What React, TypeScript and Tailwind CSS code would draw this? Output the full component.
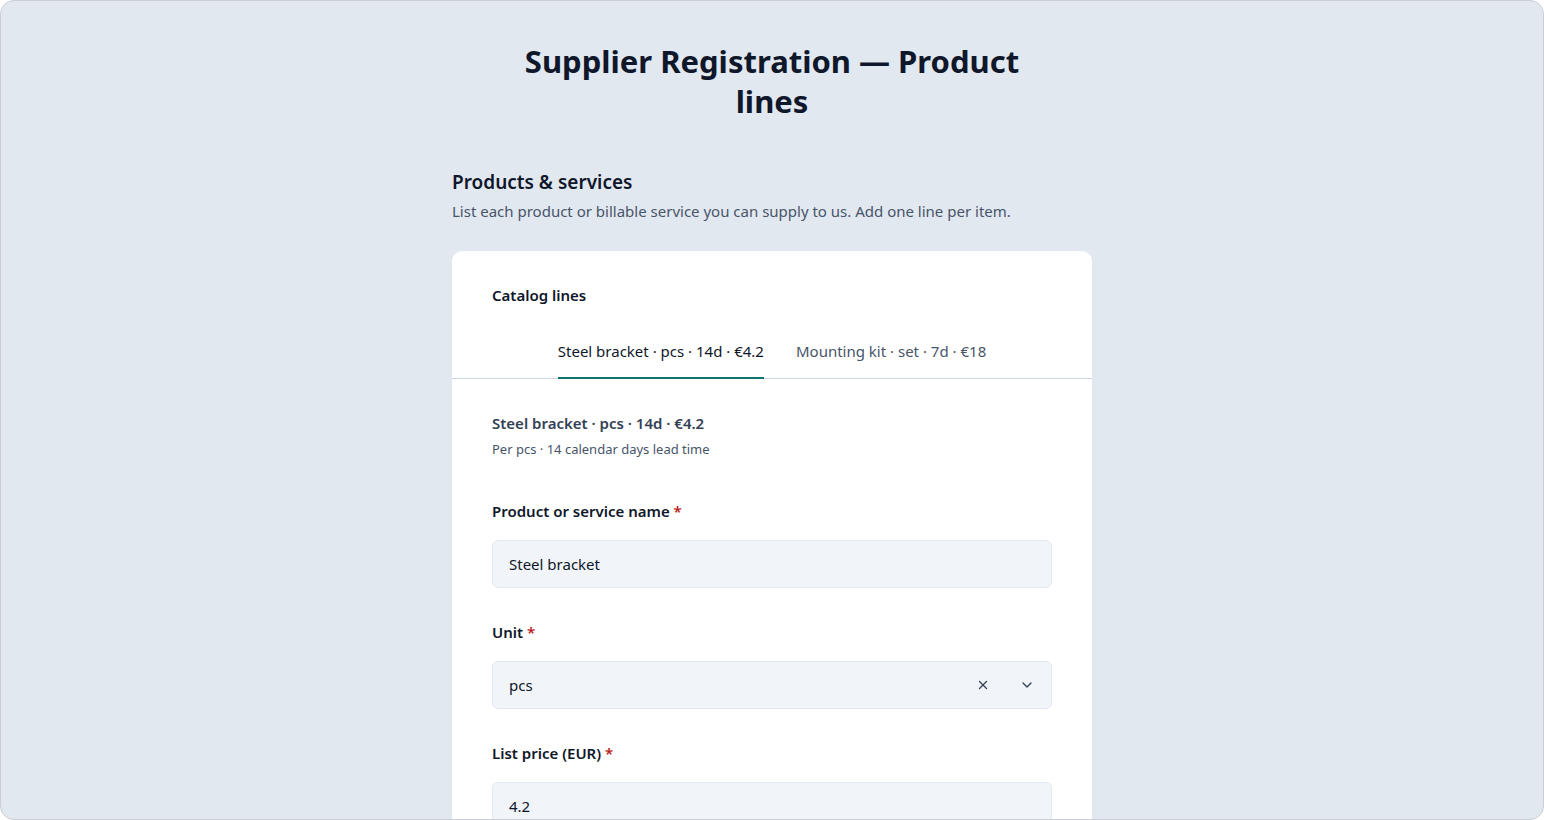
import { X, ChevronDown } from "lucide-react"

const font = { fontFamily: '"Noto Sans", "Open Sans", sans-serif' }

function Label({ text }: { text: string }) {
  return (
    <label className="block text-[15px] leading-[22px] font-semibold text-[#0f172a] mb-[18px]">
      {text} <span className="text-[#b91c1c]">*</span>
    </label>
  )
}

export default function App() {
  const tabs = ["Steel bracket · pcs · 14d · €4.2", "Mounting kit · set · 7d · €18"]
  const active = 0

  return (
    <div className="bg-white w-[1544px] h-[820px] overflow-hidden" style={font}>
      <div className="w-full h-full rounded-[14px] border border-[#c9ced6] bg-[#e2e8f0] overflow-hidden">
        <div className="w-[640px] mx-auto">
          <h1 className="w-[500px] mx-auto text-center text-[31px] leading-[40px] font-bold text-[#0f172a] pt-[40px]">
            Supplier Registration — Product lines
          </h1>

          <div className="mt-[47px]">
            <h2 className="text-[19px] leading-[28px] font-semibold text-[#0f172a]">Products &amp; services</h2>
            <p className="text-[15px] leading-[22px] text-[#475569] mt-[4px]">
              List each product or billable service you can supply to us. Add one line per item.
            </p>
          </div>

          <div className="mt-[29px] bg-white rounded-[10px]">
            <div className="px-10 pt-[33px]">
              <h3 className="text-[15px] leading-[22px] font-semibold text-[#0f172a]">Catalog lines</h3>
            </div>

            <div className="mt-[22px] border-b border-[#cbd5e1] flex justify-center gap-8">
              {tabs.map((t, i) => (
                <button
                  key={t}
                  className={`pt-[12px] pb-[15px] -mb-px text-[15px] leading-[22px] border-b-2 ${
                    i === active ? "border-[#0f766e] text-[#0f172a]" : "border-transparent text-[#475569]"
                  }`}
                >
                  {t}
                </button>
              ))}
            </div>

            <div className="px-10 pt-[33px] pb-10">
              <div className="text-[15px] leading-[22px] font-semibold text-[#334155]">
                Steel bracket · pcs · 14d · €4.2
              </div>
              <div className="text-[13px] leading-[20px] text-[#475569] mt-[5px]">
                Per pcs · 14 calendar days lead time
              </div>

              <div className="mt-[41px]">
                <Label text="Product or service name" />
                <div className="h-[48px] rounded-[6px] bg-[#f1f5f9] border border-[#e2e8f0] flex items-center px-4 text-[15px] text-[#0f172a]">
                  Steel bracket
                </div>
              </div>

              <div className="mt-[33px]">
                <Label text="Unit" />
                <div className="h-[48px] rounded-[6px] bg-[#f1f5f9] border border-[#e2e8f0] flex items-center pl-4 pr-[16px] text-[15px] text-[#0f172a]">
                  <span className="flex-1">pcs</span>
                  <X className="w-[14px] h-[14px] text-[#334155]" strokeWidth={2.2} />
                  <ChevronDown className="w-[16px] h-[16px] text-[#334155] ml-[29px]" strokeWidth={2} />
                </div>
              </div>

              <div className="mt-[33px]">
                <Label text="List price (EUR)" />
                <div className="h-[48px] rounded-[6px] bg-[#f1f5f9] border border-[#e2e8f0] flex items-center px-4 text-[15px] text-[#0f172a]">
                  4.2
                </div>
              </div>
            </div>
          </div>
        </div>
      </div>
    </div>
  )
}
